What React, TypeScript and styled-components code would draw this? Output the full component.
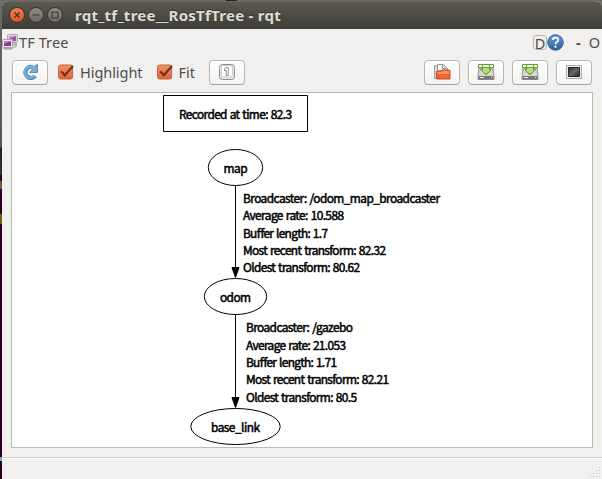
import React from 'react';
import styled, { createGlobalStyle } from 'styled-components';

const GlobalStyle = createGlobalStyle`
  * { box-sizing: border-box; }
  body { margin: 0; overflow: hidden; background: #5c5b59; }
`;

const Desktop = styled.div`
  width: 602px;
  height: 479px;
  padding: 1px 0 0 2px;
  background:
    linear-gradient(#75aac9, #75aac9) 0 457px / 2px 4px no-repeat,
    linear-gradient(#65623f, #65623f) 0 181px / 2px 8px no-repeat,
    linear-gradient(#67630f, #67630f) 0 214px / 2px 10px no-repeat,
    linear-gradient(#24202a, #24202a) 226px 0 / 11px 1px no-repeat,
    linear-gradient(#6c6b69 0, #555 147px, #222 148px, #333 174px, #2c001e 175px);
`;

const Window = styled.main`
  display: flex;
  flex-direction: column;
  width: 600px;
  height: 478px;
  overflow: hidden;
  border-radius: 6px 6px 0 0;
  background: #f1f0ee;
  color: #4c4c4c;
  font-family: "Noto Sans", "Open Sans", sans-serif;
`;

const TitleBar = styled.header`
  display: flex;
  align-items: center;
  flex: 0 0 28px;
  padding: 0 0 1px 7px;
  background: linear-gradient(#5b5951, #3d3c37);
  border-top: 1px solid #69675e;
`;

const WindowControls = styled.div`
  display: flex;
  gap: 3px;
`;

const WindowButton = styled.button<{ $close?: boolean }>`
  display: grid;
  place-items: center;
  width: 16px;
  height: 16px;
  padding: 0;
  border: 1px solid #35342f;
  border-radius: 50%;
  background: ${p => (p.$close ? 'linear-gradient(#f68057, #e2501f)' : 'linear-gradient(#918e85, #69675f)')};
  color: #393832;
`;

const Title = styled.h1`
  margin: 0 0 0 12px;
  color: #dfdbd2;
  font: 700 15px/20px "Noto Sans", sans-serif;
  letter-spacing: 0.26px;
  white-space: pre;
  text-shadow: 0 -1px #34332e;
`;

const DockHeader = styled.div`
  display: flex;
  align-items: center;
  flex: 0 0 27px;
  padding: 0 2px 1px 0;
`;

const DockTitle = styled.span`
  margin: 0 auto 0 1px;
  font-size: 14.5px;
  line-height: 20px;
  letter-spacing: 0.1px;
`;

const ReloadKey = styled.span`
  display: grid;
  place-items: center;
  width: 14px;
  height: 15px;
  margin-right: 0;
  border: 1px solid #b8b5b0;
  border-radius: 3px;
  font-size: 14.5px;
  line-height: 14px;
`;

const DockAction = styled.span<{ $gap: number; $strong?: boolean }>`
  margin-left: ${p => p.$gap}px;
  font-size: 14.5px;
  font-weight: ${p => (p.$strong ? 700 : 400)};
  line-height: 20px;
`;

const Toolbar = styled.div`
  display: flex;
  align-items: center;
  flex: 0 0 36px;
  padding: 0 10px 3px 10px;
`;

const ToolButton = styled.button<{ $gap?: number }>`
  display: grid;
  place-items: center;
  width: 36px;
  height: 25px;
  padding: 0 0 1px;
  margin-left: ${p => p.$gap ?? 0}px;
  border: 1px solid #bab7b3;
  border-bottom-color: #a6a39f;
  border-radius: 4px;
  background: linear-gradient(#fff, #f3f2f1);
`;

const CheckLabel = styled.label<{ $gap: number }>`
  display: flex;
  align-items: center;
  gap: 6px;
  margin: 0 0 1px ${p => p.$gap}px;
  font-size: 14.5px;
  line-height: 20px;
  letter-spacing: -0.05px;
`;

const ToolGroup = styled.div`
  display: flex;
  gap: 8px;
  margin-left: auto;
`;

const Canvas = styled.section`
  flex: 0 0 356px;
  margin: 0 9px;
  border: 1px solid #bbb9b5;
  background: #fff;
  overflow: hidden;
`;

const Graph = styled.svg`
  display: block;
  width: 580px;
  height: 354px;
  fill: none;
  stroke: #000;
  stroke-width: 1;
`;

const GraphText = styled.text`
  fill: #000;
  stroke: #000;
  stroke-width: 0.5px;
  font: 400 11.9px "Noto Sans CJK SC", sans-serif;
  word-spacing: 0.8px;
`;

const StatusBar = styled.footer`
  display: flex;
  align-items: flex-end;
  justify-content: flex-end;
  flex: 1;
  margin-top: 9px;
  border-top: 1px solid #d0cfcd;
  box-shadow: inset 0 1px #fff;
`;

const PluginIcon = () => (
  <svg width="16" height="16" viewBox="0 0 16 16">
    <ellipse cx="6" cy="14.2" rx="5" ry="1.5" fill="#aaa" />
    <rect x="5.5" y=".5" width="10" height="8" rx="1" fill="#ded9dd" stroke="#aaa4aa" />
    <path d="M7 2h7v5H7z" fill="#9c529b" /><path d="M7 2h7L7 5z" fill="#c793c7" />
    <path d="M9 9h5l1 2H9" fill="#ccc" stroke="#999" strokeWidth=".6" />
    <rect x=".5" y="5.5" width="10" height="8" rx="1" fill="#e9e5e8" stroke="#aaa4aa" />
    <path d="M2 7h7v5H2z" fill="#8c3c8b" /><path d="M2 7h7L2 10z" fill="#bd80bc" />
    <path d="M11 13q4 1 3-2" fill="none" stroke="#999" />
  </svg>
);

const HelpIcon = () => (
  <svg width="17" height="17" viewBox="0 0 17 17">
    <defs><linearGradient id="help" x2="0" y2="1"><stop stopColor="#6ba0d0" /><stop offset="1" stopColor="#285f96" /></linearGradient></defs>
    <circle cx="8.5" cy="8.5" r="7.7" fill="url(#help)" stroke="#285d91" />
    <path d="M5.8 6Q6 3.7 8.5 3.7t2.7 2.2q0 1.4-1.5 2.2-1.2.7-1.2 2.2" fill="none" stroke="#fff" strokeWidth="1.7" />
    <circle cx="8.5" cy="12.7" r="1.1" fill="#fff" />
  </svg>
);

const RefreshIcon = () => (
  <svg width="16" height="16" viewBox="0 0 16 16">
    <path d="M13.2 12A5.5 5.5 0 1 1 10.5 3.2" fill="none" stroke="#4b86bd" strokeWidth="4.2" />
    <path d="M15.4.6v7.8H7.6l2.9-2.9-1-1.5z" fill="#78addb" stroke="#4b86bd" strokeLinejoin="round" />
    <path d="M12.7 11.4A5.4 5.4 0 1 1 11.5 4.1" fill="none" stroke="#78addb" strokeWidth="2.5" />
  </svg>
);

const CheckIcon = () => (
  <svg width="16" height="16" viewBox="0 0 16 16">
    <defs><linearGradient id="check" x2="0" y2="1"><stop stopColor="#f69063" /><stop offset="1" stopColor="#e86234" /></linearGradient></defs>
    <rect x=".6" y="1" width="14" height="14" rx="2" fill="url(#check)" stroke="#bd6540" />
    <path d="m3.2 7.3 3.6 4L15 2" fill="none" stroke="#693522" strokeWidth="2.1" />
  </svg>
);

const OneIcon = () => (
  <svg width="18" height="18" viewBox="0 0 18 18">
    <rect x="1.5" y="1.5" width="15" height="15" rx="3" fill="#e8e8e5" stroke="#8e8e8a" />
    <rect x="3.5" y="2.5" width="11" height="11.5" rx="2" fill="#fff" stroke="#cbcbc7" />
    <path d="M6.5 5.8 8.2 4.5h2v8h-2v-5H6.5z" fill="#fff" stroke="#777" strokeWidth=".8" />
  </svg>
);

const FolderIcon = () => (
  <svg width="18" height="16" viewBox="0 0 18 16">
    <path d="M1.5 14.5V1.5h3v13z" fill="#ddd" stroke="#999" />
    <path d="M4.5.5h6l4 4v7h-10z" fill="#f3f3f1" stroke="#999" /><path d="M9.5.5v4h4" fill="#ddd" stroke="#999" />
    <path d="M3.5 15V8q0-1 1-1H8l1-1h7q1 0 1 1v8z" fill="#ee6532" stroke="#c84a1e" />
    <path d="M4.5 8h4l1-1H16v3H4.5z" fill="#fa936c" />
  </svg>
);

const SaveIcon = () => (
  <svg width="18" height="18" viewBox="0 0 18 18">
    <path d="m2 5-1 8v3.5h16V13l-1-8z" fill="#d7d7d4" stroke="#999" />
    <path d="M1.5 13h15v3.5h-15z" fill="#777875" /><path d="M3 14.5h4M14 14.5h1" stroke="#eee" />
    <path d="M1.5 1.5h15v3h-4v2h2L9 12 3.5 6.5h2v-2h-4z" fill="#f2f8e8" stroke="#699f34" />
    <path d="M5.5 4.5h7v2h2L9 11.5 3.5 6.5h2z" fill="#b9dc7b" stroke="#699f34" />
    <path d="M5.5 1.5v3M12.5 1.5v3" stroke="#699f34" />
  </svg>
);

const ScreenIcon = () => (
  <svg width="16" height="14" viewBox="0 0 16 14">
    <defs><linearGradient id="screen" x2="1" y2="1"><stop stopColor="#333" /><stop offset=".5" stopColor="#666" /><stop offset="1" stopColor="#222" /></linearGradient></defs>
    <path d="M.5.5h15v13H.5z" fill="#eee" stroke="#aaa" />
    <path d="M2.5 2.5h11v9h-11z" fill="url(#screen)" stroke="#222" />
  </svg>
);

type Line = [string, number, number, number];
const graphLines: Line[] = [
  ['Recorded at time: 82.3', 167, 26, 113],
  ['map', 211.5, 79.5, 24],
  ['Broadcaster: /odom_map_broadcaster', 231, 109.9, 197],
  ['Average rate: 10.588', 231, 127.2, 101],
  ['Buffer length: 1.7', 231, 144.5, 85],
  ['Most recent transform: 82.32', 231, 161.8, 143],
  ['Oldest transform: 80.62', 231, 179.1, 117],
  ['odom', 208, 209, 31],
  ['Broadcaster: /gazebo', 234, 239.4, 107],
  ['Average rate: 21.053', 234, 256.7, 100],
  ['Buffer length: 1.71', 234, 274, 91],
  ['Most recent transform: 82.21', 234, 291.3, 143],
  ['Oldest transform: 80.5', 234, 308.6, 111],
  ['base_link', 199, 338.5, 49],
];

const TransformGraph = () => (
  <Graph viewBox="0 0 580 354">
    <path d="M151.5 2.5h144v36h-144z" />
    <ellipse cx="223.5" cy="74.5" rx="27.2" ry="18" />
    <ellipse cx="223.5" cy="203.5" rx="31.2" ry="18" />
    <ellipse cx="223.5" cy="333.5" rx="44.7" ry="18" />
    <path d="M223.5 92.5v84M223.5 221.5v84" />
    <path d="M220 174.5h7l-3.5 10zM220 304.5h7l-3.5 10z" fill="#000" />
    {graphLines.map(([text, x, y, width]) => (
      <GraphText key={`${text}-${y}`} x={x} y={y} textLength={width}>{text}</GraphText>
    ))}
  </Graph>
);

export default function App() {
  return (
    <>
      <GlobalStyle />
      <Desktop>
        <Window>
          <TitleBar>
            <WindowControls>
              <WindowButton $close aria-label="Close"><svg width="8" height="8"><path d="m1.5 1.5 5 5m0-5-5 5" stroke="currentColor" strokeWidth="1.4" /></svg></WindowButton>
              <WindowButton aria-label="Minimize"><svg width="8" height="8"><path d="M.5 4h7" stroke="currentColor" strokeWidth="1.2" /></svg></WindowButton>
              <WindowButton aria-label="Maximize"><svg width="8" height="8"><path d="M1 1h6v6H1z" fill="none" stroke="currentColor" strokeWidth="1.2" /></svg></WindowButton>
            </WindowControls>
            <Title>rqt_tf_tree__RosTfTree - rqt</Title>
          </TitleBar>
          <DockHeader>
            <PluginIcon />
            <DockTitle>TF Tree</DockTitle>
            <ReloadKey>D</ReloadKey>
            <HelpIcon />
            <DockAction $gap={12} $strong>-</DockAction>
            <DockAction $gap={8}>O</DockAction>
          </DockHeader>
          <Toolbar>
            <ToolButton aria-label="Refresh"><RefreshIcon /></ToolButton>
            <CheckLabel $gap={10}><CheckIcon />Highlight</CheckLabel>
            <CheckLabel $gap={14}><CheckIcon />Fit</CheckLabel>
            <ToolButton $gap={14} aria-label="Fit in view"><OneIcon /></ToolButton>
            <ToolGroup>
              <ToolButton aria-label="Open"><FolderIcon /></ToolButton>
              <ToolButton aria-label="Save DOT"><SaveIcon /></ToolButton>
              <ToolButton aria-label="Save SVG"><SaveIcon /></ToolButton>
              <ToolButton aria-label="Save image"><ScreenIcon /></ToolButton>
            </ToolGroup>
          </Toolbar>
          <Canvas><TransformGraph /></Canvas>
          <StatusBar>
            <svg width="12" height="12" fill="#c9c7c3"><path d="M9 0h1v1H9zM6 3h1v1H6zM9 3h1v1H9zM3 6h1v1H3zM6 6h1v1H6zM9 6h1v1H9zM0 9h1v1H0zM3 9h1v1H3zM6 9h1v1H6zM9 9h1v1H9z" /></svg>
          </StatusBar>
        </Window>
      </Desktop>
    </>
  );
}
